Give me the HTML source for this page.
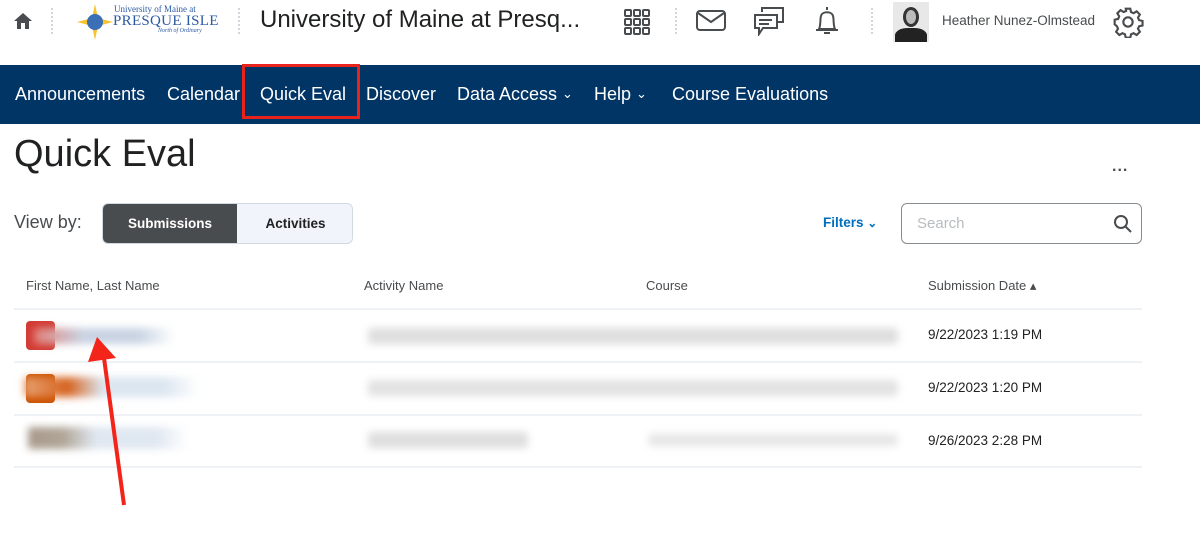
<!DOCTYPE html>
<html><head><meta charset="utf-8"><style>
*{margin:0;padding:0;box-sizing:border-box}
body{width:1200px;height:537px;background:#fff;font-family:"Liberation Sans",sans-serif;position:relative;overflow:hidden;color:#202122}
.a{position:absolute}
.dots{position:absolute;width:0;border-left:2px dotted #cfd6de;height:26px}
.nav{top:65px;left:0;width:1200px;height:59px;background:#003566}
.nav span{position:absolute;top:19px;color:#fff;font-size:18px;white-space:nowrap}
.nav small{font-size:13px;position:relative;top:-2px}
.hdr{top:278px;font-size:13px;color:#494c4e}
.line{left:14px;width:1128px;height:2px;background:#eef1f5}
.blur{position:absolute;filter:blur(4px);border-radius:3px}
.date{font-size:13.5px;color:#202122;left:928px}
</style></head><body>
<svg class="a" style="left:13px;top:11px" width="20" height="20" viewBox="0 0 20 20"><path d="M10 2 L1 10 H4 V18 H8 V12 H12 V18 H16 V10 H19 Z" fill="#494c4e"/></svg>
<div class="dots" style="left:51px;top:8px"></div>
<svg class="a" style="left:77px;top:4px" width="36" height="36" viewBox="0 0 36 36"><path d="M18 0 L21 14 L36 18 L21 22 L18 36 L15 22 L0 18 L15 14Z" fill="#f6c431"/><circle cx="18" cy="18" r="8" fill="#3b6fb6"/></svg>
<div class="a" style="left:114px;top:5px;font-family:'Liberation Serif',serif;color:#2a5aa4;font-size:9px;line-height:9px">University of Maine at</div>
<div class="a" style="left:113px;top:13px;font-family:'Liberation Serif',serif;color:#2a5aa4;font-size:15px;letter-spacing:.3px">PRESQUE ISLE</div>
<div class="a" style="left:158px;top:28px;font-family:'Liberation Serif',serif;font-style:italic;color:#2a5aa4;font-size:6px">North of Ordinary</div>
<div class="dots" style="left:238px;top:8px"></div>
<div class="a" style="left:260px;top:6px;font-size:24px;color:#202122">University of Maine at Presq...</div>
<svg class="a" style="left:623px;top:8px" width="28" height="28" viewBox="0 0 28 28" fill="none" stroke="#494c4e" stroke-width="2"><rect x="2" y="2" width="6" height="6" rx="1"/><rect x="11" y="2" width="6" height="6" rx="1"/><rect x="20" y="2" width="6" height="6" rx="1"/><rect x="2" y="11" width="6" height="6" rx="1"/><rect x="11" y="11" width="6" height="6" rx="1"/><rect x="20" y="11" width="6" height="6" rx="1"/><rect x="2" y="20" width="6" height="6" rx="1"/><rect x="11" y="20" width="6" height="6" rx="1"/><rect x="20" y="20" width="6" height="6" rx="1"/></svg>
<div class="dots" style="left:675px;top:8px"></div>
<svg class="a" style="left:696px;top:10px" width="30" height="22" viewBox="0 0 30 22" fill="none" stroke="#494c4e" stroke-width="2"><rect x="1" y="1" width="28" height="19" rx="3"/><path d="M2 3 L15 12 L28 3"/></svg>
<svg class="a" style="left:753px;top:6px" width="32" height="30" viewBox="0 0 32 30" fill="none" stroke="#494c4e" stroke-width="2"><path d="M9 6 V2 H30 V16 H25"/><path d="M2 9 H24 V22 H10 L6 28 V22 H2 Z"/><path d="M6 14 H19 M6 18 H16"/></svg>
<svg class="a" style="left:812px;top:5px" width="30" height="32" viewBox="0 0 30 32" fill="none" stroke="#494c4e" stroke-width="2"><path d="M15 2 V5 M7 24 C9 20 8 13 9 11 C10 6 20 6 21 11 C22 13 21 20 23 24 Z M12 28 H18"/><path d="M4 25 H26"/></svg>
<div class="dots" style="left:871px;top:8px"></div>
<div class="a" style="left:893px;top:2px;width:36px;height:40px;background:#e8e8e8;overflow:hidden"><div class="a" style="left:10px;top:5px;width:16px;height:20px;border-radius:50%;background:#bbb;border:3px solid #333"></div><div class="a" style="left:2px;top:26px;width:32px;height:18px;border-radius:40% 40% 0 0;background:#222"></div></div>
<div class="a" style="left:942px;top:13px;font-size:13.5px;color:#494c4e">Heather Nunez-Olmstead</div>
<svg class="a" style="left:1112px;top:6px" width="32" height="32" viewBox="0 0 24 24" fill="none" stroke="#494c4e" stroke-width="1.6"><circle cx="12" cy="12" r="3.5"/><path d="M10.3 2h3.4l.6 2.6 1.9.8 2.3-1.4 2.4 2.4-1.4 2.3.8 1.9 2.6.6v3.4l-2.6.6-.8 1.9 1.4 2.3-2.4 2.4-2.3-1.4-1.9.8-.6 2.6h-3.4l-.6-2.6-1.9-.8-2.3 1.4-2.4-2.4 1.4-2.3-.8-1.9L2 13.7v-3.4l2.6-.6.8-1.9-1.4-2.3 2.4-2.4 2.3 1.4 1.9-.8z"/></svg>

<div class="a nav">
<span style="left:15px">Announcements</span>
<span style="left:167px">Calendar</span>
<span style="left:260px">Quick Eval</span>
<span style="left:366px">Discover</span>
<span style="left:457px">Data Access <small>⌄</small></span>
<span style="left:594px">Help <small>⌄</small></span>
<span style="left:672px">Course Evaluations</span>
</div>
<div class="a" style="left:242px;top:64px;width:118px;height:55px;border:3px solid #e8231c"></div>

<div class="a" style="left:14px;top:133px;font-size:38px;color:#202122">Quick Eval</div>
<div class="a" style="left:1112px;top:158px;font-size:16px;letter-spacing:1px;color:#494c4e;font-weight:bold">...</div>
<div class="a" style="left:14px;top:212px;font-size:18px;color:#494c4e">View by:</div>
<div class="a" style="left:102px;top:203px;width:251px;height:41px;border:1px solid #d3d9e3;border-radius:6px;background:#f1f5fb;overflow:hidden">
<div class="a" style="left:0;top:0;width:134px;height:41px;background:#494c4e;color:#fff;font-size:13.5px;font-weight:bold;text-align:center;line-height:39px">Submissions</div>
<div class="a" style="left:134px;top:0;width:117px;height:41px;color:#202122;font-size:13.5px;font-weight:bold;text-align:center;line-height:39px">Activities</div>
</div>
<div class="a" style="left:823px;top:215px;font-size:13.5px;color:#006fbf;font-weight:bold">Filters <span style="font-size:12px">⌄</span></div>
<div class="a" style="left:901px;top:203px;width:241px;height:41px;border:1px solid #868c8f;border-radius:6px"><span class="a" style="left:15px;top:11px;font-size:15px;color:#b8bcbf">Search</span>
<svg class="a" style="left:211px;top:10px" width="20" height="20" viewBox="0 0 20 20" fill="none" stroke="#494c4e" stroke-width="2"><circle cx="8" cy="8" r="6"/><path d="M12.5 12.5 L18 18"/></svg></div>

<div class="a hdr" style="left:26px">First Name, Last Name</div>
<div class="a hdr" style="left:364px">Activity Name</div>
<div class="a hdr" style="left:646px">Course</div>
<div class="a hdr" style="left:928px">Submission Date ▴</div>
<div class="a line" style="top:308px"></div>
<div class="a line" style="top:361px"></div>
<div class="a line" style="top:414px"></div>
<div class="a line" style="top:466px"></div>

<div class="a" style="left:26px;top:321px;width:29px;height:29px;border-radius:4px;background:#d33b34"></div>
<div class="blur" style="left:34px;top:328px;width:140px;height:16px;background:linear-gradient(90deg,#e08078 0,#c8d3e2 35%,#c8d3e2 75%,#fff)"></div>
<div class="blur" style="left:368px;top:328px;width:530px;height:16px;background:#dedede"></div>
<div class="a date" style="top:327px">9/22/2023 1:19 PM</div>

<div class="a" style="left:26px;top:374px;width:29px;height:29px;border-radius:4px;background:#cc5200"></div>
<div class="blur" style="left:24px;top:377px;width:175px;height:20px;background:linear-gradient(90deg,#e6a070 0,#d6631f 25%,#dbe6f0 45%,#dbe6f0 80%,#fff)"></div>
<div class="blur" style="left:368px;top:380px;width:530px;height:16px;background:#e2e2e2"></div>
<div class="a date" style="top:380px">9/22/2023 1:20 PM</div>

<div class="blur" style="left:28px;top:427px;width:160px;height:22px;background:linear-gradient(90deg,#a89a8c 0,#b0a596 22%,#dfe7f0 42%,#dfe7f0 80%,#fff)"></div>
<div class="blur" style="left:368px;top:432px;width:160px;height:16px;background:#dedede"></div>
<div class="blur" style="left:648px;top:434px;width:250px;height:12px;background:#e6e6e6"></div>
<div class="a date" style="top:433px">9/26/2023 2:28 PM</div>

<svg class="a" style="left:0;top:0" width="1200" height="537"><path d="M124 505 L104 358" stroke="#f3241a" stroke-width="4"/><path d="M97 337 L88 362 L116 358Z" fill="#f3241a"/></svg>
</body></html>
